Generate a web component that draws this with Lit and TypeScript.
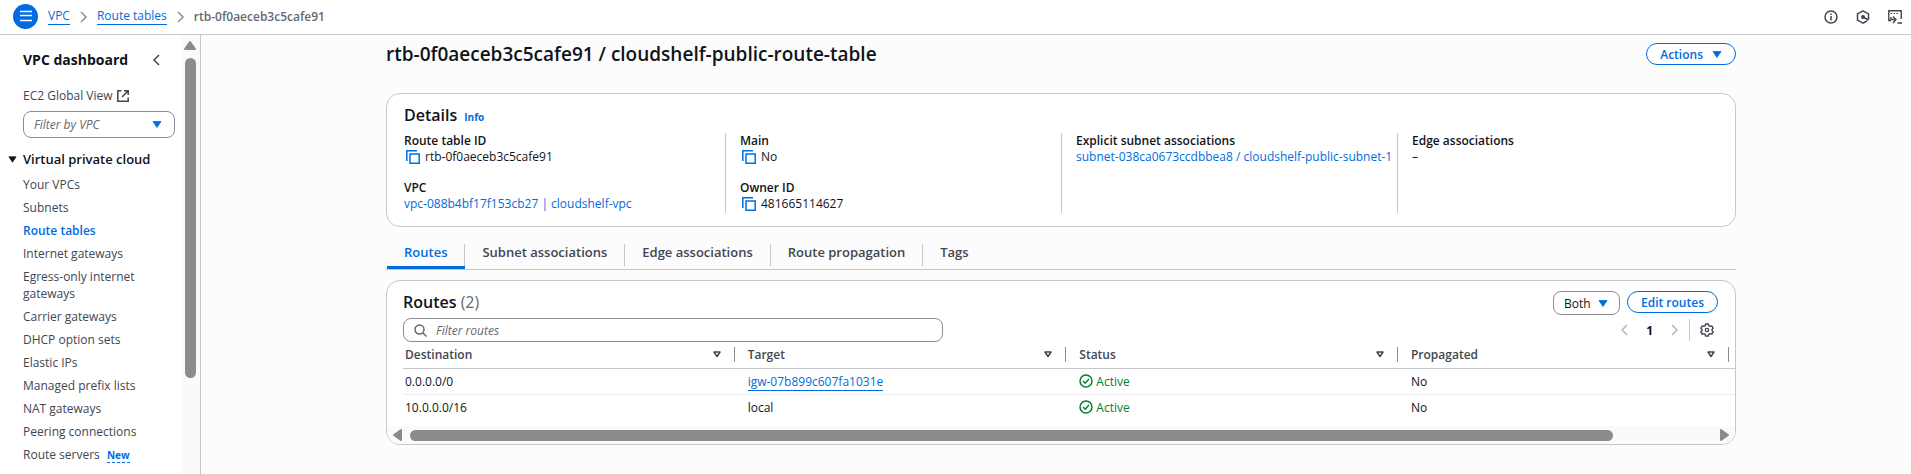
import { LitElement, html, css, svg, nothing } from "lit";
import { customElement, state } from "lit/decorators.js";

const icons = {
  menu: html`<svg class="icon" width="25" height="25" viewBox="0 0 25 25" aria-hidden="true"><circle cx="12.5" cy="12.5" r="12.5" fill="#006ce0"/><path d="M7 7.500h12M7 11.500h12M7 16.500h12" stroke="#fff" stroke-width="1.400"/></svg>`,
  caret: html`<svg class="icon caret" width="10" height="7" viewBox="0 0 10 7" aria-hidden="true"><path d="M1 .500h8L5 6.500z" fill="currentColor" stroke="currentColor" stroke-linejoin="round" stroke-width=".8"/></svg>`,
  right: html`<svg class="icon" width="7" height="12" viewBox="0 0 7 12" aria-hidden="true"><path d="M1 1l5 5-5 5" fill="none" stroke="currentColor" stroke-width="1.5"/></svg>`,
  left: html`<svg class="icon" width="7" height="12" viewBox="0 0 7 12" aria-hidden="true"><path d="M6 1L1 6l5 5" fill="none" stroke="currentColor" stroke-width="1.5"/></svg>`,
  external: html`<svg class="icon" width="12" height="12" viewBox="0 0 12 12" aria-hidden="true"><path d="M4.500.800H.800v10.400h10.400V7.500M7 .800h4.200V5M11.200.800L5 7" fill="none" stroke="currentColor" stroke-width="1.500"/></svg>`,
  copy: html`<svg class="icon" width="14" height="14" viewBox="0 0 14 14" aria-hidden="true"><path d="M.800 11V.800H11M4 4h9.200v9.200H4z" fill="none" stroke="#006ce0" stroke-width="1.500"/></svg>`,
  search: html`<svg class="icon" width="13" height="13" viewBox="0 0 13 13" aria-hidden="true"><circle cx="5.500" cy="5.500" r="4.500" fill="none" stroke="#656871" stroke-width="1.500"/><path d="M9 9l3.500 3.500" stroke="#656871" stroke-width="1.500"/></svg>`,
  sort: html`<svg class="icon" width="8" height="7" viewBox="0 0 8 7" aria-hidden="true"><path d="M1 1h6L4 5.500z" fill="none" stroke="#424650" stroke-width="1.500" stroke-linejoin="round"/></svg>`,
  check: html`<svg class="icon" width="14" height="14" viewBox="0 0 14 14" aria-hidden="true"><circle cx="7" cy="7" r="6" fill="none" stroke="#00802f" stroke-width="1.500"/><path d="M4 7l2.200 2.200L10 5" fill="none" stroke="#00802f" stroke-width="1.500"/></svg>`,
  gear: html`<svg class="icon" width="14" height="14" viewBox="0 0 14 14" aria-hidden="true"><path d="M5.600 1h2.800l.4 1.700 1.300.7 1.700-.5 1.400 2.400L12 6.400v1.300l1.200 1.100-1.400 2.400-1.700-.5-1.300.7L8.400 13H5.600l-.4-1.600-1.300-.7-1.700.5L.8 8.800 2 7.700V6.400L.8 5.300l1.400-2.400 1.700.5 1.300-.7z" fill="none" stroke="#424650" stroke-width="1.400" stroke-linejoin="round"/><circle cx="7" cy="7" r="1.700" fill="none" stroke="#424650" stroke-width="1.300"/></svg>`,
  info: html`<svg class="icon" width="14" height="14" viewBox="0 0 14 14" aria-hidden="true"><circle cx="7" cy="7" r="6" fill="none" stroke="#424650" stroke-width="1.500"/><path d="M7 6v4.500M7 3.500V5" stroke="#424650" stroke-width="1.500"/></svg>`,
  hexagon: html`<svg class="icon" width="14" height="14" viewBox="0 0 14 14" aria-hidden="true"><path d="M11 11l-4 2.200-5.500-3V3.900L7 .900l5.500 3v5.500" fill="none" stroke="#424650" stroke-width="1.500" stroke-linejoin="round"/><circle cx="7" cy="7" r="2" fill="#424650"/><path d="M7 7l5.500 3" stroke="#424650" stroke-width="1.500"/></svg>`,
  shell: html`<svg class="icon" width="14" height="14" viewBox="0 0 14 14" aria-hidden="true"><path d="M3 10.500H.800V.800h12.400V9" fill="none" stroke="#424650" stroke-width="1.400"/><path d="M2.500 3.500h1.500M5.500 3.500H7M8.500 3.500H10" stroke="#424650" stroke-width="1.200"/><path d="M3 7v2.500h4M5 6.500l3 3-3 3.500M9.500 13H14" fill="none" stroke="#424650" stroke-width="1.400"/></svg>`,
};

const NAV = [
  "Your VPCs", "Subnets", "Route tables", "Internet gateways",
  "Egress-only internet gateways", "Carrier gateways", "DHCP option sets",
  "Elastic IPs", "Managed prefix lists", "NAT gateways", "Peering connections",
];
const TABS = ["Routes", "Subnet associations", "Edge associations", "Route propagation", "Tags"];
const COLUMNS = ["Destination", "Target", "Status", "Propagated"];
const ROUTES = [
  { destination: "0.0.0.0/0", target: "igw-07b899c607fa1031e", link: true, status: "Active", propagated: "No" },
  { destination: "10.0.0.0/16", target: "local", link: false, status: "Active", propagated: "No" },
];

@customElement("app-root")
export class AppRoot extends LitElement {
  @state() private tab = "Routes";

  static styles = css`
    :host {
      display: grid;
      grid-template-rows: auto 1fr;
      height: 100vh;
      overflow: hidden;
      background: #fff;
      color: #0f141a;
      font-family: "Open Sans", "Noto Sans", sans-serif;
      font-size: 12px;
      line-height: 17px;
    }
    * { box-sizing: border-box; }
    .icon { display: block; flex: none; }
    h1, h2, h3, p, ul, dl, dd { margin: 0; padding: 0; }
    a { color: #006ce0; text-decoration: none; }
    button, select, input { font: inherit; color: inherit; }
    button { background: none; border: 0; padding: 0; cursor: pointer; }
    .underlined { border-bottom: 1px solid #006ce0; }

    .topbar {
      display: flex;
      align-items: center;
      justify-content: space-between;
      height: 35px;
      padding: 0 9px 1px 13px;
      border-bottom: 1px solid #c6c6cd;
    }
    .crumbs { display: flex; align-items: center; gap: 10px; color: #8c8c94; }
    .crumbs b { color: #656871; font-weight: 600; }
    .crumbs .underlined { line-height: 16px; }
    .tools { display: flex; gap: 18px; }

    .layout { display: grid; grid-template-columns: 201px 1fr; min-height: 0; }
    .sidebar { display: flex; border-right: 1px solid #c6c6cd; min-height: 0; overflow: hidden; }
    .menu { flex: 1; padding: 14px 6px 0 23px; }
    .menu-head { display: flex; align-items: center; justify-content: space-between; padding-right: 15px; color: #424650; }
    .menu-head h2 { font-size: 14px; line-height: 22px; color: #0f141a; font-weight: 700; }
    .global { display: flex; align-items: center; gap: 4px; margin-top: 16px; color: #424650; }
    .picker { position: relative; display: flex; align-items: center; color: #006ce0; }
    .picker select {
      appearance: none;
      width: 100%;
      border: 1px solid #8c8c94;
      border-radius: 8px;
      background: #fff;
      color: #0f141a;
      padding: 0 10px;
    }
    .picker .caret { position: absolute; right: 13px; pointer-events: none; }
    .picker.vpc { margin-top: 7px; }
    .picker.vpc select { height: 27px; color: #656871; font-style: italic; }
    .section { display: flex; align-items: center; gap: 6px; margin: 12px 0 0 -15px; }
    .section .caret { width: 9px; }
    .section h3 { font-size: 13px; line-height: 18px; font-weight: 600; }
    .links { list-style: none; display: grid; gap: 6px; margin-top: 8px; }
    .links a { color: #424650; }
    .links .current { color: #006ce0; font-weight: 600; }
    .links .new { margin-left: 4px; color: #006ce0; font-size: 10px; font-weight: 700; border-bottom: 1px dashed #006ce0; }
    .vbar { display: flex; flex-direction: column; align-items: center; gap: 8px; width: 19px; padding: 6px 1px 0 0; background: #fafafa; }
    .vbar .thumb { width: 11px; height: 74%; border-radius: 6px; background: #8b8b8b; }

    .main { background: #fcfcfd; padding: 7px 24px 0 34px; min-width: 0; }
    .content { max-width: 1350px; margin: 0 auto; }
    .title { display: flex; justify-content: space-between; align-items: center; }
    .title h1 { font-size: 19px; line-height: 24px; font-weight: 600; }
    .pill {
      display: flex;
      align-items: center;
      justify-content: center;
      gap: 9px;
      height: 22px;
      padding: 0 13px;
      border: 1px solid #006ce0;
      border-radius: 11px;
      background: #fff;
      color: #006ce0;
      font-weight: 600;
    }
    .card { border: 1px solid #c6c6cd; border-radius: 14px; background: #fff; }
    .details { margin-top: 27px; padding: 10px 2px 13px; }
    .heading { display: flex; align-items: baseline; gap: 7px; padding-left: 15px; }
    .card h2 { font-size: 16px; line-height: 22px; font-weight: 600; }
    .info { font-size: 10px; font-weight: 700; }
    .fields { display: grid; grid-template-columns: repeat(4, 1fr); margin-top: 7px; }
    .field-col { display: grid; align-content: start; gap: 15px; height: 80px; padding-left: 14px; border-left: 1px solid #c6c6cd; line-height: 16px; }
    .field-col:first-child { border-color: transparent; }
    .field-col dt { font-weight: 600; }
    .field-col dd { display: flex; align-items: center; gap: 5px; }
    .field-col dd .icon { margin-left: 2px; }

    .tabs { display: flex; padding: 17px 0 0 1px; border-bottom: 1px solid #c6c6cd; }
    .tab { height: 25px; border-bottom: 3px solid transparent; color: #424650; font-size: 13px; font-weight: 600; display: flex; }
    .tab span { padding: 0 17px; line-height: 17px; border-right: 1px solid #c6c6cd; }
    .tab:last-child span { border-color: transparent; }
    .tab.active { color: #006ce0; border-color: #006ce0; }

    .routes { margin-top: 10px; overflow: hidden; }
    .routes-head { display: flex; justify-content: space-between; padding: 10px 17px 0 16px; }
    .count { color: #656871; font-weight: 400; }
    .actions { display: flex; gap: 7px; }
    .picker.both select { height: 24px; width: 67px; }
    .picker.both .caret { right: 12px; }
    .filterbar { display: flex; align-items: center; justify-content: space-between; padding: 3px 21px 0 16px; }
    .search { display: flex; align-items: center; gap: 9px; flex: 0 1 540px; height: 24px; padding: 0 10px; border: 1px solid #8c8c94; border-radius: 8px; }
    .search input { flex: 1; border: 0; outline: 0; padding: 0; background: none; }
    .search input::placeholder { color: #656871; font-style: italic; opacity: 1; }
    .pager { display: flex; align-items: center; gap: 18px; color: #b4b4bb; }
    .pager b { color: #0f141a; }
    .pager .prefs { display: flex; align-items: center; height: 22px; margin-left: -7px; padding-left: 10px; border-left: 1px solid #c6c6cd; }

    .table-wrap { padding-left: 16px; }
    table { width: 100%; table-layout: fixed; border-collapse: collapse; text-align: left; }
    .col { width: 24.9%; }
    th, td { padding: 0 0 0 13px; height: 26px; }
    th:first-child, td:first-child { padding-left: 2px; }
    th { color: #424650; font-weight: 600; border-bottom: 1px solid #c6c6cd; }
    th:last-child { padding-right: 6px; }
    tbody tr:first-child td { border-bottom: 1px solid #ebebf0; }
    .head-cell { display: flex; align-items: center; justify-content: space-between; height: 15px; padding-right: 13px; border-right: 1px solid #8c8c94; }
    .status { display: flex; align-items: center; gap: 3px; color: #00802f; }
    .hbar { display: flex; align-items: center; gap: 8px; height: 18px; margin-top: 6px; padding: 0 6px; background: #fafafa; }
    .hbar .track { flex: 1; }
    .hbar .thumb { width: 92.4%; height: 11px; border-radius: 6px; background: #8b8b8b; }
  `;

  private arrow(points: string, w: number, h: number) {
    return html`<svg class="icon" width=${w} height=${h} viewBox="0 0 ${w} ${h}" aria-hidden="true">${svg`<polygon points=${points} fill="#8b8b8b" stroke="#8b8b8b" stroke-width="2" stroke-linejoin="round" />`}</svg>`;
  }

  private copied(text: string) {
    return html`<dd><button aria-label="Copy ${text}">${icons.copy}</button>${text}</dd>`;
  }

  render() {
    return html`
      <header class="topbar">
        <nav class="crumbs" aria-label="Breadcrumbs">
          <button aria-label="Open navigation">${icons.menu}</button>
          <a class="underlined" href="#vpc">VPC</a>${icons.right}
          <a class="underlined" href="#tables">Route tables</a>${icons.right}
          <b>rtb-0f0aeceb3c5cafe91</b>
        </nav>
        <div class="tools">
          <button aria-label="Info">${icons.info}</button>
          <button aria-label="Assistant">${icons.hexagon}</button>
          <button aria-label="CloudShell">${icons.shell}</button>
        </div>
      </header>
      <div class="layout">
        <aside class="sidebar">
          <nav class="menu" aria-label="VPC">
            <div class="menu-head"><h2>VPC dashboard</h2><button aria-label="Close navigation">${icons.left}</button></div>
            <a class="global" href="#global">EC2 Global View ${icons.external}</a>
            <div class="picker vpc">
              <select aria-label="Filter by VPC"><option>Filter by VPC</option></select>${icons.caret}
            </div>
            <div class="section">${icons.caret}<h3>Virtual private cloud</h3></div>
            <ul class="links">
              ${NAV.map((item) => html`<li><a href="#nav" class=${item === "Route tables" ? "current" : ""}>${item}</a></li>`)}
              <li><a href="#nav">Route servers</a> <a class="new" href="#new">New</a></li>
            </ul>
          </nav>
          <div class="vbar" aria-hidden="true">${this.arrow("6,1 11,8 1,8", 12, 9)}<div class="thumb"></div></div>
        </aside>
        <main class="main">
          <div class="content">
            <div class="title">
              <h1>rtb-0f0aeceb3c5cafe91 / cloudshelf-public-route-table</h1>
              <button class="pill">Actions ${icons.caret}</button>
            </div>
            <section class="card details">
              <div class="heading"><h2>Details</h2><a class="info" href="#info">Info</a></div>
              <div class="fields">
                <dl class="field-col">
                  <div><dt>Route table ID</dt>${this.copied("rtb-0f0aeceb3c5cafe91")}</div>
                  <div><dt>VPC</dt><dd><a href="#vpc">vpc-088b4bf17f153cb27 | cloudshelf-vpc</a></dd></div>
                </dl>
                <dl class="field-col">
                  <div><dt>Main</dt>${this.copied("No")}</div>
                  <div><dt>Owner ID</dt>${this.copied("481665114627")}</div>
                </dl>
                <dl class="field-col">
                  <div><dt>Explicit subnet associations</dt><dd><a href="#subnet">subnet-038ca0673ccdbbea8 / cloudshelf-public-subnet-1</a></dd></div>
                </dl>
                <dl class="field-col"><div><dt>Edge associations</dt><dd>–</dd></div></dl>
              </div>
            </section>
            <div class="tabs" role="tablist">
              ${TABS.map((name) => html`<button role="tab" aria-selected=${name === this.tab} class="tab ${name === this.tab ? "active" : ""}" @click=${() => (this.tab = name)}><span>${name}</span></button>`)}
            </div>
            <section class="card routes">
              <div class="routes-head">
                <h2>Routes <span class="count">(2)</span></h2>
                <div class="actions">
                  <div class="picker both"><select aria-label="Propagation"><option>Both</option></select>${icons.caret}</div>
                  <button class="pill">Edit routes</button>
                </div>
              </div>
              <div class="filterbar">
                <label class="search">${icons.search}<input type="search" placeholder="Filter routes" aria-label="Filter routes" /></label>
                <div class="pager">
                  <button aria-label="Previous page" disabled>${icons.left}</button><b>1</b>
                  <button aria-label="Next page" disabled>${icons.right}</button>
                  <div class="prefs"><button aria-label="Preferences">${icons.gear}</button></div>
                </div>
              </div>
              <div class="table-wrap">
                <table>
                  <colgroup>${COLUMNS.map((_, i) => html`<col class=${i < 3 ? "col" : nothing} />`)}</colgroup>
                  <thead><tr>${COLUMNS.map((c) => html`<th scope="col"><div class="head-cell">${c}${icons.sort}</div></th>`)}</tr></thead>
                  <tbody>
                    ${ROUTES.map((r) => html`<tr>
                      <td>${r.destination}</td>
                      <td>${r.link ? html`<a class="underlined" href="#igw">${r.target}</a>` : r.target}</td>
                      <td><div class="status">${icons.check}${r.status}</div></td>
                      <td>${r.propagated}</td>
                    </tr>`)}
                  </tbody>
                </table>
              </div>
              <div class="hbar" aria-hidden="true">
                ${this.arrow("1,6 8,1 8,11", 9, 12)}
                <div class="track"><div class="thumb"></div></div>
                ${this.arrow("8,6 1,1 1,11", 9, 12)}
              </div>
            </section>
          </div>
        </main>
      </div>
    `;
  }
}
